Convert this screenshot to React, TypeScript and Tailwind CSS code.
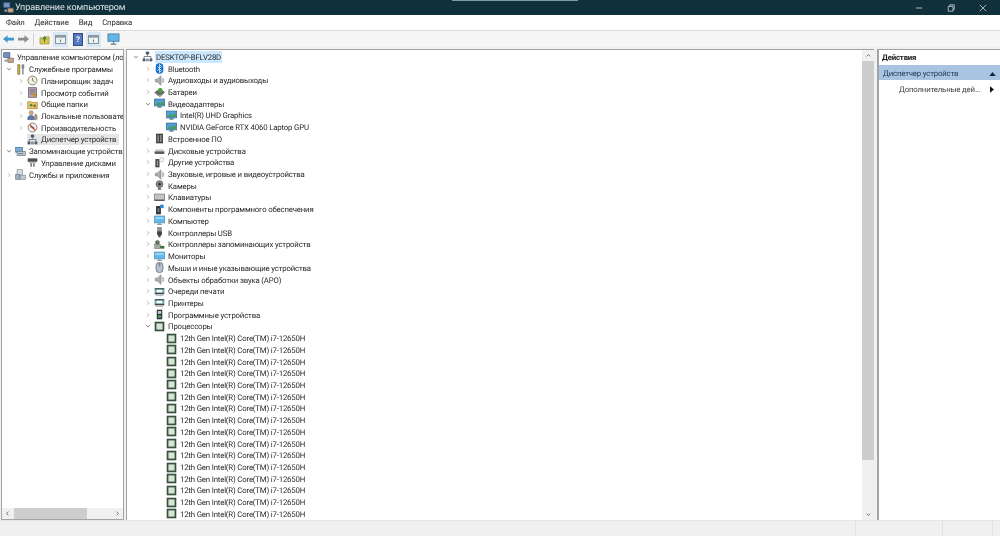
import React from "react";

type IconName =
  | "manage" | "tools" | "clock" | "log" | "share" | "users" | "perf" | "devmgr" | "storage" | "disk" | "services"
  | "bluetooth" | "audio" | "battery" | "display" | "firmware" | "hdd" | "other" | "camera" | "keyboard" | "software"
  | "monitor" | "usb" | "controller" | "mouse" | "printer" | "softdev" | "cpu";

const Icon = ({ name }: { name: IconName }) => {
  const cls = "w-[11px] h-[11px] shrink-0";
  switch (name) {
    case "manage":
      return <svg viewBox="0 0 16 16" className={cls}><rect x="1" y="1" width="9" height="7" fill="#6f93c4" stroke="#44597a" /><path d="M7 9h8v6H7z" fill="#c7a98e" stroke="#6b5a4c" /><path d="M2 11h4v3H2z" fill="#8e9fb8" /></svg>;
    case "tools":
      return <svg viewBox="0 0 16 16" className={cls}><path d="M4 1h3v14H4z" fill="#d8b34a" stroke="#7e6a2a" /><path d="M10 1h3v5h-1v9h-1V6h-1z" fill="#8d99a8" stroke="#525c68" strokeWidth=".6" /></svg>;
    case "clock":
      return <svg viewBox="0 0 16 16" className={cls}><circle cx="8" cy="8" r="6.5" fill="#f3efe0" stroke="#85806c" strokeWidth="1.4" /><path d="M8 4v4l3 2" fill="none" stroke="#4b4b4b" /></svg>;
    case "log":
      return <svg viewBox="0 0 16 16" className={cls}><rect x="2" y="1" width="12" height="14" fill="#b9a3a8" stroke="#5d5368" /><path d="M4 4h8M4 7h8M4 10h8" stroke="#4d5c86" /><rect x="8" y="9" width="5" height="5" fill="#c8963e" /></svg>;
    case "share":
      return <svg viewBox="0 0 16 16" className={cls}><path d="M1 4h5l1 1h8v9H1z" fill="#e8c766" stroke="#a08636" /><circle cx="6" cy="9" r="2" fill="#4b8a4f" /><circle cx="11" cy="10" r="2" fill="#8b6a3a" /></svg>;
    case "users":
      return <svg viewBox="0 0 16 16" className={cls}><circle cx="6" cy="4" r="3" fill="#d7a77c" stroke="#5a5a6a" strokeWidth=".6" /><path d="M1 14c0-5 2-6 5-6s5 1 5 6z" fill="#5b76a8" stroke="#36405a" strokeWidth=".6" /><path d="M11 5l4 2v7h-4z" fill="#a58e75" /></svg>;
    case "perf":
      return <svg viewBox="0 0 16 16" className={cls}><circle cx="8" cy="8" r="6.5" fill="#f6f3ee" stroke="#7c7672" strokeWidth="1.3" /><path d="M4 4l8 8" stroke="#c0392b" strokeWidth="1.8" /><path d="M5 9l2-3 2 3 2-2" fill="none" stroke="#444" strokeWidth=".8" /></svg>;
    case "devmgr":
      return <svg viewBox="0 0 16 16" className={cls}><path d="M8 1v6M3 12V8h10v4" fill="none" stroke="#555f6b" strokeWidth="1.1" /><rect x="5.5" y="1" width="5" height="4" fill="#4f5a68" /><rect x="1" y="11" width="4" height="4" fill="#4f5a68" /><rect x="6" y="11" width="4" height="4" fill="#8793a3" /><rect x="11" y="11" width="4" height="4" fill="#4f5a68" /></svg>;
    case "storage":
      return <svg viewBox="0 0 16 16" className={cls}><rect x="1" y="2" width="10" height="7" fill="#77aedb" stroke="#42678c" /><rect x="3" y="8" width="12" height="6" fill="#bfc7ce" stroke="#6d7780" /><path d="M5 11h7" stroke="#567" /></svg>;
    case "disk":
      return <svg viewBox="0 0 16 16" className={cls}><rect x="1" y="2" width="14" height="5" fill="#4b4f55" /><path d="M3 7h10v2H3z" fill="#aeb4ba" /><path d="M5 9h2v5H5zM9 9h2v5H9z" fill="#5f6670" /></svg>;
    case "services":
      return <svg viewBox="0 0 16 16" className={cls}><rect x="3" y="1" width="8" height="9" fill="#d8dde2" stroke="#7f8a95" /><rect x="1" y="8" width="6" height="7" fill="#9fb1c4" stroke="#66788c" /><rect x="8" y="9" width="7" height="6" fill="#c4c9ce" stroke="#7f8a95" /></svg>;
    case "bluetooth":
      return <svg viewBox="0 0 16 16" className={cls}><rect x="2.5" y="0.5" width="11" height="15" rx="5" fill="#1272d2" /><path d="M5 5l6 6-3 3V2l3 3-6 6" fill="none" stroke="#fff" strokeWidth="1.1" /></svg>;
    case "audio":
      return <svg viewBox="0 0 16 16" className={cls}><path d="M2 6h3l5-5v14l-5-5H2z" fill="#a9b0b6" stroke="#5f666c" strokeWidth=".7" /><path d="M12 4v8M14 5v6" stroke="#8c9399" /></svg>;
    case "battery":
      return <svg viewBox="0 0 16 16" className={cls}><path d="M1 8l6-4 8 3-6 5z" fill="#5f6b62" stroke="#2e352f" strokeWidth=".7" /><circle cx="9" cy="5" r="3.6" fill="#4f9d3f" /><path d="M3 10l6 4 6-6" fill="none" stroke="#333" /></svg>;
    case "display":
      return <svg viewBox="0 0 16 16" className={cls}><rect x="0.5" y="1.5" width="15" height="10" fill="#4f9fd8" stroke="#356a90" /><path d="M2 10l4-4 3 2 5-4v6z" fill="#4d9a52" /><path d="M5 12h6v2H5z" fill="#44707a" /></svg>;
    case "firmware":
      return <svg viewBox="0 0 16 16" className={cls}><rect x="3" y="1" width="10" height="14" fill="#3d3d3d" /><path d="M5 3h2v10H5zM9 3h2v10H9z" fill="#9a9a9a" /></svg>;
    case "hdd":
      return <svg viewBox="0 0 16 16" className={cls}><path d="M1 9h14v4H1z" fill="#555b60" /><path d="M3 6h10l2 3H1z" fill="#c9cdd1" /></svg>;
    case "other":
      return <svg viewBox="0 0 16 16" className={cls}><rect x="2" y="3" width="6" height="12" fill="#3f4347" /><path d="M4 5h2v8H4z" fill="#8f969c" /><circle cx="11" cy="4" r="3" fill="#fff" stroke="#a6adb3" /></svg>;
    case "camera":
      return <svg viewBox="0 0 16 16" className={cls}><circle cx="8" cy="6" r="5" fill="#8b8f8a" stroke="#53564f" /><circle cx="8" cy="6" r="2" fill="#2f3230" /><path d="M5 14h6l-2-3H7z" fill="#65685f" /></svg>;
    case "keyboard":
      return <svg viewBox="0 0 16 16" className={cls}><rect x="0.5" y="3" width="15" height="9" fill="#c2c5c8" stroke="#6e7276" /><path d="M1 11h14v2H1z" fill="#54585c" /></svg>;
    case "software":
      return <svg viewBox="0 0 16 16" className={cls}><rect x="3" y="3" width="7" height="12" fill="#2d3138" /><rect x="9" y="1" width="5" height="5" fill="#2c86cf" /><path d="M5 6h3v6H5z" fill="#6f7782" /></svg>;
    case "monitor":
      return <svg viewBox="0 0 16 16" className={cls}><rect x="0.5" y="1.5" width="15" height="10" fill="#5fb8ee" stroke="#5b8fb4" /><path d="M2 3h12v3H2z" fill="#9ad6f6" /><path d="M6 12h4v1.5h2v1H4v-1h2z" fill="#8f9aa3" /></svg>;
    case "usb":
      return <svg viewBox="0 0 16 16" className={cls}><rect x="5.5" y="1" width="5" height="5" fill="#8d9298" stroke="#484c50" strokeWidth=".6" /><path d="M4.5 6h7v5l-2 2v2h-3v-2l-2-2z" fill="#3f4347" /></svg>;
    case "controller":
      return <svg viewBox="0 0 16 16" className={cls}><circle cx="5" cy="5" r="3" fill="#5f7a5c" stroke="#39473a" strokeWidth=".6" /><rect x="1" y="8" width="8" height="6" fill="#a5aaa2" stroke="#50544f" strokeWidth=".6" /><rect x="9" y="10" width="6" height="4" fill="#3c6e3a" /></svg>;
    case "mouse":
      return <svg viewBox="0 0 16 16" className={cls}><rect x="3" y="0.7" width="10" height="14.6" rx="4.5" fill="#b9c2cb" stroke="#515b66" /><path d="M8 1v5" stroke="#515b66" /><rect x="6.8" y="3" width="2.4" height="3.5" rx="1" fill="#5e8fbd" /></svg>;
    case "printer":
      return <svg viewBox="0 0 16 16" className={cls}><path d="M1 3h14v2.5H1z" fill="#3c5a5c" /><path d="M1 5.5h3v4H1zM12 5.5h3v4h-3z" fill="#56b3ae" /><path d="M4 5.5h8v4H4z" fill="#fff" /><path d="M1 9.5h14V12H1z" fill="#3f4a4c" /><path d="M3 12h10v2H3z" fill="#d5dadb" stroke="#6b7075" strokeWidth=".5" /></svg>;
    case "softdev":
      return <svg viewBox="0 0 16 16" className={cls}><rect x="4" y="1" width="8" height="14" fill="#2f3338" /><rect x="5.5" y="3" width="5" height="4" fill="#c6ccd2" /><rect x="5.5" y="9" width="5" height="4" fill="#4e9a54" /></svg>;
    case "cpu":
      return <svg viewBox="0 0 16 16" className={cls}><rect x="1" y="1" width="14" height="14" fill="#37503f" /><rect x="3.5" y="3.5" width="9" height="9" fill="#d5e6d2" /></svg>;
  }
};

const Chevron = ({ open }: { open?: boolean }) => (
  <svg viewBox="0 0 8 8" className="w-[6px] h-[6px] shrink-0">
    <path d={open ? "M1.5 2.5L4 5.5L6.5 2.5" : "M2.5 1.5L5.5 4L2.5 6.5"} fill="none" stroke={open ? "#707070" : "#b8b8b8"} strokeWidth="1" />
  </svg>
);

type Node = { t: string; i: IconName; d: number; c?: "open" | "closed"; sel?: boolean };

const Row = ({ n, base, step }: { n: Node; base: number; step: number }) => (
  <div className="h-[11.72px] flex items-center whitespace-nowrap" style={{ paddingLeft: base + n.d * step }}>
    <span className="w-[13px] shrink-0 flex justify-center">
      {n.c && <Chevron open={n.c === "open"} />}
    </span>
    <Icon name={n.i} />
    <span className={"ml-[2px] px-[1px] pt-[1px] leading-[11px] " + (n.sel ? "bg-[#cce8ff]" : "")}>{n.t}</span>
  </div>
);

const leftTree: Node[] = [
  { t: "Служебные программы", i: "tools", d: 0, c: "open" },
  { t: "Планировщик задач", i: "clock", d: 1, c: "closed" },
  { t: "Просмотр событий", i: "log", d: 1, c: "closed" },
  { t: "Общие папки", i: "share", d: 1, c: "closed" },
  { t: "Локальные пользователи и группы", i: "users", d: 1, c: "closed" },
  { t: "Производительность", i: "perf", d: 1, c: "closed" },
];

const devices: Node[] = [
  { t: "DESKTOP-BFLV28D", i: "devmgr", d: 0, c: "open", sel: true },
  { t: "Bluetooth", i: "bluetooth", d: 1, c: "closed" },
  { t: "Аудиовходы и аудиовыходы", i: "audio", d: 1, c: "closed" },
  { t: "Батареи", i: "battery", d: 1, c: "closed" },
  { t: "Видеоадаптеры", i: "display", d: 1, c: "open" },
  { t: "Intel(R) UHD Graphics", i: "display", d: 2 },
  { t: "NVIDIA GeForce RTX 4060 Laptop GPU", i: "display", d: 2 },
  { t: "Встроенное ПО", i: "firmware", d: 1, c: "closed" },
  { t: "Дисковые устройства", i: "hdd", d: 1, c: "closed" },
  { t: "Другие устройства", i: "other", d: 1, c: "closed" },
  { t: "Звуковые, игровые и видеоустройства", i: "audio", d: 1, c: "closed" },
  { t: "Камеры", i: "camera", d: 1, c: "closed" },
  { t: "Клавиатуры", i: "keyboard", d: 1, c: "closed" },
  { t: "Компоненты программного обеспечения", i: "software", d: 1, c: "closed" },
  { t: "Компьютер", i: "monitor", d: 1, c: "closed" },
  { t: "Контроллеры USB", i: "usb", d: 1, c: "closed" },
  { t: "Контроллеры запоминающих устройств", i: "controller", d: 1, c: "closed" },
  { t: "Мониторы", i: "monitor", d: 1, c: "closed" },
  { t: "Мыши и иные указывающие устройства", i: "mouse", d: 1, c: "closed" },
  { t: "Объекты обработки звука (APO)", i: "audio", d: 1, c: "closed" },
  { t: "Очереди печати", i: "printer", d: 1, c: "closed" },
  { t: "Принтеры", i: "printer", d: 1, c: "closed" },
  { t: "Программные устройства", i: "softdev", d: 1, c: "closed" },
  { t: "Процессоры", i: "cpu", d: 1, c: "open" },
  ...Array.from({ length: 16 }, (): Node => ({ t: "12th Gen Intel(R) Core(TM) i7-12650H", i: "cpu", d: 2 })),
];

const PanelToggle = () => (
  <div className="ml-[3px] w-[15px] h-[15px] bg-[#d9e8f5] flex items-center justify-center">
    <svg viewBox="0 0 12 10" className="w-[11px] h-[9px]"><rect x=".5" y=".5" width="11" height="9" fill="#eef1f1" stroke="#7f8c96" /><path d="M1 1h10v2H1z" fill="#8d9ba6" /><path d="M6 5v3" stroke="#4e8a4e" /></svg>
  </div>
);

const Toolbar = () => (
  <div className="h-[17px] flex items-center bg-[#f5f5f5] border-t border-[#dcdcdc] pl-[3px] shrink-0">
    <svg viewBox="0 0 12 10" className="w-[11px] h-[10px]"><path d="M0 5l5-4v2.5h7v3H5V9z" fill="#3f97cf" /></svg>
    <svg viewBox="0 0 12 10" className="ml-[4px] w-[11px] h-[10px]"><path d="M12 5L7 1v2.5H0v3h7V9z" fill="#8b8b8b" /></svg>
    <div className="ml-[4px] w-px h-[13px] bg-[#d4d4d4]" />
    <svg viewBox="0 0 12 12" className="ml-[5px] w-[11px] h-[11px]"><path d="M1 4h4l1-1h5v8H1z" fill="#d9c24f" stroke="#96853a" strokeWidth=".6" /><path d="M6 9V4M4 6l2-3 2 3" fill="none" stroke="#3f8a3a" strokeWidth="1.2" /></svg>
    <PanelToggle />
    <div className="ml-[5px] w-[10px] h-[13px] bg-[#5577c4] border border-[#33497f] text-white text-[8px] font-bold leading-[11px] text-center">?</div>
    <PanelToggle />
    <svg viewBox="0 0 14 13" className="ml-[6px] w-[13px] h-[12px]"><rect x="1" y="1" width="12" height="8" fill="#63b5e6" stroke="#4c86ad" /><path d="M7 9v2M4 12h6" stroke="#5c7a8d" strokeWidth="1.2" /></svg>
  </div>
);

export default function App() {
  return (
    <div className="w-[1000px] h-[536px] overflow-hidden flex flex-col bg-[#f0f0f0] text-[7.8px] tracking-[-0.17px] text-[#2a2a2a] blur-[0.35px] [text-rendering:geometricPrecision] font-['Roboto','Noto_Sans',sans-serif]">
      <div className="relative h-[15px] bg-[#10303c] flex items-center text-[#dfe6e9] shrink-0">
        <div className="absolute left-[452px] top-0 w-[126px] h-px bg-[#7f9aa0]" />
        <div className="ml-[3px] w-[10px]"><Icon name="manage" /></div>
        <span className="ml-[2px] pt-[2px] text-[9px] tracking-[-0.1px]">Управление компьютером</span>
        <div className="ml-auto flex items-center">
          <svg viewBox="0 0 10 10" className="mr-[24px] w-[8px] h-[8px]"><path d="M1 5h8" stroke="#cfd8dc" /></svg>
          <svg viewBox="0 0 10 10" className="mr-[24px] w-[8px] h-[8px]"><path d="M1.5 3h6v6h-6zM3.5 3V1h5.5v6H7.5" fill="none" stroke="#cfd8dc" /></svg>
          <svg viewBox="0 0 10 10" className="mr-[13px] w-[8px] h-[8px]"><path d="M1 1l8 8M9 1l-8 8" stroke="#cfd8dc" /></svg>
        </div>
      </div>

      <div className="h-[15px] bg-white flex items-center gap-[10px] pl-[6px] pt-[1px] shrink-0">
        <span>Файл</span>
        <span>Действие</span>
        <span>Вид</span>
        <span>Справка</span>
      </div>

      <Toolbar />

      <div className="flex-1 flex min-h-0 pt-[2px] gap-[2px] pl-px bg-[#f0f0f0]">
        <div className="w-[123px] shrink-0 flex flex-col border border-[#a3a3a3] bg-white pt-[1px] overflow-hidden">
          <div className="flex-1 overflow-hidden pt-[0.5px]">
            <div className="h-[11.72px] flex items-center whitespace-nowrap pl-[1px]">
              <Icon name="manage" />
              <span className="ml-[3px] pt-[1px] leading-[11px]">Управление компьютером (локальным)</span>
            </div>
            {leftTree.map((n) => <Row key={n.t} n={n} base={0} step={12} />)}
            <div className="h-[11.72px] flex items-center whitespace-nowrap pl-[12px]">
              <span className="w-[13px] shrink-0" />
              <div className="flex items-center h-full bg-[#e6e6e6] pr-[2px]">
                <Icon name="devmgr" />
                <span className="ml-[2px] px-[1px] pt-[1px] leading-[11px]">Диспетчер устройств</span>
              </div>
            </div>
            <Row n={{ t: "Запоминающие устройства", i: "storage", d: 0, c: "open" }} base={0} step={12} />
            <div className="h-[11.72px] flex items-center whitespace-nowrap pl-[25px]">
              <Icon name="disk" />
              <span className="ml-[2px] px-[1px] pt-[1px] leading-[11px]">Управление дисками</span>
            </div>
            <Row n={{ t: "Службы и приложения", i: "services", d: 0, c: "closed" }} base={0} step={12} />
          </div>
          <div className="h-[11px] shrink-0 bg-[#f0f0f0] flex items-center justify-between px-[3px]">
            <svg viewBox="0 0 8 8" className="w-[5px] h-[5px]"><path d="M5.5 1L2.5 4l3 3" fill="none" stroke="#666" strokeWidth="1.4" /></svg>
            <div className="h-full w-[73px] bg-[#cdcdcd] mr-[27px] ml-[2px]" />
            <svg viewBox="0 0 8 8" className="w-[5px] h-[5px]"><path d="M2.5 1l3 3-3 3" fill="none" stroke="#666" strokeWidth="1.4" /></svg>
          </div>
        </div>

        <div className="flex-1 min-w-0 flex border-t border-l border-[#a3a3a3] bg-white">
          <div className="flex-1 min-w-0 overflow-hidden pt-[1px]">
            {devices.map((n, i) => <Row key={i} n={n} base={2} step={12} />)}
          </div>
          <div className="w-[12px] shrink-0 bg-[#f0f0f0] flex flex-col items-center">
            <svg viewBox="0 0 8 8" className="mt-[3px] w-[5px] h-[5px] shrink-0"><path d="M1 5.5L4 2.5l3 3" fill="none" stroke="#666" strokeWidth="1.4" /></svg>
            <div className="mt-[3px] w-full h-[399px] bg-[#cdcdcd]" />
            <svg viewBox="0 0 8 8" className="mt-auto mb-[3px] w-[5px] h-[5px] shrink-0"><path d="M1 2.5L4 5.5l3-3" fill="none" stroke="#666" strokeWidth="1.4" /></svg>
          </div>
        </div>

        <div className="w-[123px] shrink-0 ml-[1px] border-t border-l-2 border-[#a3a3a3] bg-white whitespace-nowrap">
          <div className="h-[15px] flex items-center pl-[3px] pt-[1px] font-bold text-[#1a1a1a]">Действия</div>
          <div className="h-[15px] flex items-center justify-between pl-[4px] pr-[4px] pt-[2px] bg-[#a8c4e2] text-[#233a55]">
            <span>Диспетчер устройств</span>
            <svg viewBox="0 0 8 5" className="w-[7px] h-[4px]"><path d="M0 5l4-5 4 5z" fill="#14263a" /></svg>
          </div>
          <div className="h-[17px] flex items-center justify-between pl-[20px] pr-[6px] pt-[2px]">
            <span className="text-[#444]">Дополнительные дей...</span>
            <svg viewBox="0 0 5 8" className="w-[4px] h-[7px]"><path d="M0 0l5 4-5 4z" fill="#111" /></svg>
          </div>
        </div>
      </div>

      <div className="h-[16px] shrink-0 bg-[#f0f0f0] border-t border-[#e4e4e4] flex">
        <div className="w-[856px] border-r border-[#e2e2e2]" />
        <div className="w-[87px] border-r border-[#e2e2e2]" />
        <div className="w-[50px] border-r border-[#e2e2e2]" />
      </div>
    </div>
  );
}
